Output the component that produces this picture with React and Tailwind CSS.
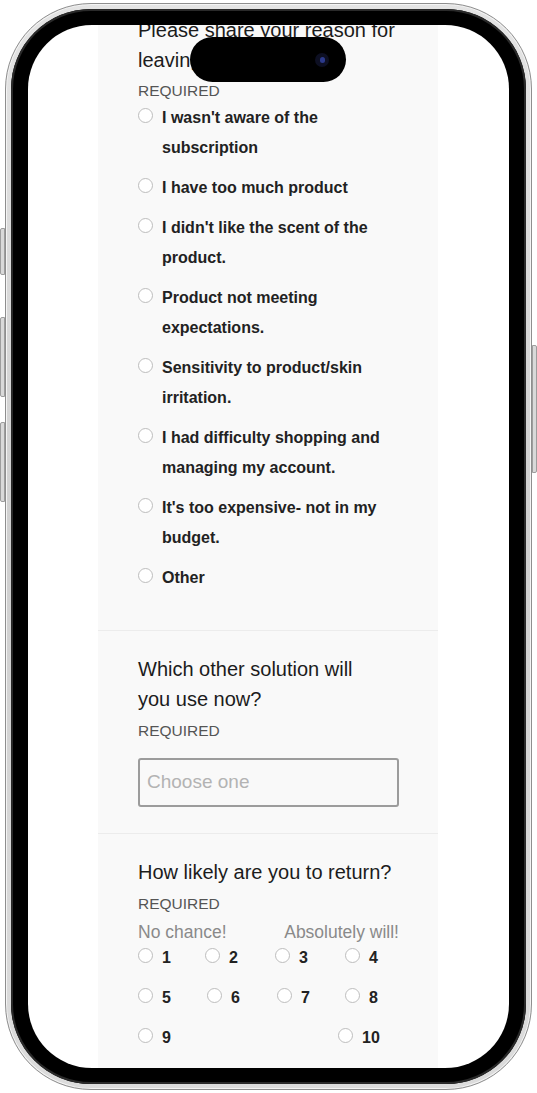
const reasons = [
  ["I wasn't aware of the", "subscription"],
  ["I have too much product"],
  ["I didn't like the scent of the", "product."],
  ["Product not meeting", "expectations."],
  ["Sensitivity to product/skin", "irritation."],
  ["I had difficulty shopping and", "managing my account."],
  ["It's too expensive- not in my", "budget."],
  ["Other"],
];

function Radio() {
  return (
    <span className="mt-[5px] block h-[15px] w-[15px] shrink-0 rounded-full border border-[#bdbdbd] bg-white" />
  );
}

function Rating({ n, className = "" }) {
  return (
    <div className={`flex items-start gap-[9px] ${className}`}>
      <Radio />
      <span className="text-[16px] font-bold leading-[30px] text-[#222]">{n}</span>
    </div>
  );
}

function Required({ className = "" }) {
  return (
    <div className={`text-[15.5px] leading-[30px] text-[#555] ${className}`}>REQUIRED</div>
  );
}

function Question({ children }) {
  return <h2 className="text-[20px] font-normal leading-[30px] text-[#1c1c1c]">{children}</h2>;
}

export default function App() {
  return (
    <div
      className="relative h-[1093px] w-[537px] overflow-hidden bg-white"
      style={{ fontFamily: '"Liberation Sans", Arial, sans-serif' }}
    >
      {/* side buttons */}
      <div className="absolute left-0 top-[228px] h-[47px] w-[5px] rounded-l-[2px] border border-[#9d9d9d] bg-[#d9d9d9]" />
      <div className="absolute left-0 top-[317px] h-[80px] w-[5px] rounded-l-[2px] border border-[#9d9d9d] bg-[#d9d9d9]" />
      <div className="absolute left-0 top-[422px] h-[80px] w-[5px] rounded-l-[2px] border border-[#9d9d9d] bg-[#d9d9d9]" />
      <div className="absolute right-0 top-[345px] h-[128px] w-[5px] rounded-r-[2px] border border-[#9d9d9d] bg-[#d9d9d9]" />

      {/* phone body */}
      <div className="ml-[5px] mt-[3px] h-[1087px] w-[527px] rounded-[86px] border border-[#8e8e8e] bg-gradient-to-b from-[#e4e4e4] via-[#cfcfcf] to-[#dcdcdc] p-[5px] shadow-[inset_0_0_0_1px_#f4f4f4]">
        <div className="h-full w-full rounded-[80px] bg-black px-[17px] pb-[16px] pt-[16px] shadow-[inset_0_0_0_2px_#2a2a2a]">
          <div className="h-full w-full overflow-hidden rounded-[64px] bg-white">
            <div className="ml-[70px] flex h-full w-[340px] flex-col bg-[#f9f9f9]">
              {/* section 1 */}
              <div className="-mt-[10px] pl-[40px] pr-[39px] pb-[37px]">
                <Question>
                  Please share your reason for
                  <br />
                  leaving
                </Question>
                <Required className="mt-[1px] -mb-[1px]" />
                <div className="-mt-[3px] flex flex-col gap-[10px]">
                  {reasons.map((lines, i) => (
                    <div key={i} className="flex items-start gap-[9px]">
                      <Radio />
                      <span className="text-[16px] font-bold leading-[30px] text-[#222]">
                        {lines.map((l, j) => (
                          <span key={j} className="block whitespace-nowrap">
                            {l}
                          </span>
                        ))}
                      </span>
                    </div>
                  ))}
                </div>
              </div>

              {/* section 2 */}
              <div className="border-t border-[#ececec] pl-[40px] pr-[39px] pb-[26px] pt-[23px]">
                <Question>
                  Which other solution will
                  <br />
                  you use now?
                </Question>
                <Required className="mt-[2px] -mb-[2px]" />
                <div className="mt-[14px] flex h-[49px] items-center rounded-[3px] border-2 border-[#9c9c9c] bg-[#f9f9f9] px-[7px]">
                  <span className="text-[19px] text-[#b3b3b3]">Choose one</span>
                </div>
              </div>

              {/* section 3 */}
              <div className="flex-1 border-t border-[#ececec] pl-[40px] pr-[39px] pt-[23px]">
                <Question>How likely are you to return?</Question>
                <Required className="mt-[2px] -mb-[2px]" />
                <div className="flex justify-between text-[17.5px] leading-[30px] text-[#8a8a8a]">
                  <span>No chance!</span>
                  <span>Absolutely will!</span>
                </div>
                <div className="-mt-[4px] grid grid-cols-[67px_70px_70px_1fr] gap-y-[10px]">
                  <Rating n="1" />
                  <Rating n="2" />
                  <Rating n="3" />
                  <Rating n="4" />
                  <Rating n="5" />
                  <Rating n="6" className="ml-[2px]" />
                  <Rating n="7" className="ml-[2px]" />
                  <Rating n="8" />
                  <Rating n="9" className="col-span-3" />
                  <Rating n="10" className="-ml-[7px]" />
                </div>
              </div>
            </div>
          </div>
        </div>
      </div>

      {/* dynamic island */}
      <div className="absolute left-[190px] top-[37px] flex h-[45px] w-[156px] items-center justify-end rounded-full bg-black pr-[17px]">
        <div className="flex h-[14px] w-[14px] items-center justify-center rounded-full bg-[#0d0f22]">
          <div className="h-[6px] w-[5px] rounded-full bg-[#2c3a8c]" />
        </div>
      </div>
    </div>
  );
}
